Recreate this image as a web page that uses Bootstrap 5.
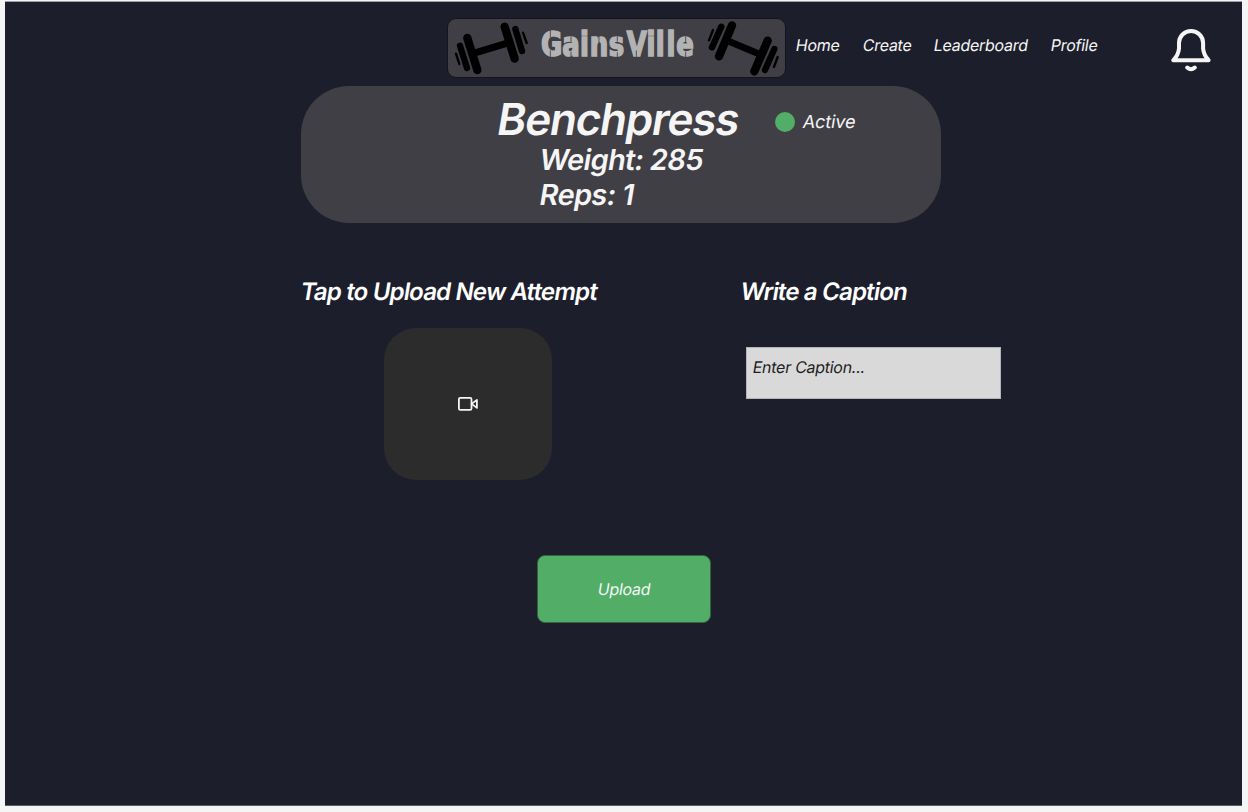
<!DOCTYPE html>
<html lang="en">
<head>
    <meta charset="UTF-8">
    <meta name="viewport" content="width=device-width, initial-scale=1.0">
    <title>GainsVille</title>

    <link href="https://cdn.jsdelivr.net/npm/bootstrap@5.3.0/dist/css/bootstrap.min.css" rel="stylesheet">

    <style>
        body {
            background-color: #f5f5f5;
            font-family: Inter, sans-serif;
            color: #f5f5f5;
            padding: 1px 6px 6px 5px;
        }
        /* slanted upright letters, the real italic has a different "a" */
        .slanted {
            display: inline-block;
            transform: skewX(-9.4deg);
            letter-spacing: -0.27px;
        }
        .app-frame {
            height: 805px;
            background-color: #1d1e2b;
            border-top: 1px solid #a0a1a8;
            border-bottom: 1px solid #5c5c67;
        }
        .top-bar {
            padding: 16px 31px 0 442px;
            height: 84px;
        }
        .logo-box {
            width: 339px;
            height: 60px;
            background-color: #403f45;
            border: 1px solid #14141c;
            border-radius: 9px;
        }
        .logo-box svg { display: block; }
        .main-links { margin: 16px 0 0 10px; gap: 23px; }
        .main-links a {
            color: #f5f5f5;
            font-size: 16px;
            line-height: 22px;
        }
        .bell-btn { margin-top: 7px; }
        .lift-card {
            width: 640px;
            height: 137px;
            margin-left: 296px;
            border-radius: 48px;
            background-color: #403f45;
            padding: 8px 0 0 197px;
        }
        .lift-card h1 {
            width: 277px;
            font-size: 44px;
            line-height: 50px;
            font-weight: 600;
        }
        .lift-card h1 .slanted { letter-spacing: -1.2px; }
        .status { padding-top: 6px; }
        .status-dot { width: 20px; height: 20px; background-color: #52ad66; }
        .status-text { font-size: 18px; line-height: 24px; }
        .status .status-text { letter-spacing: -0.1px; }
        .lift-stats {
            font-size: 29px;
            line-height: 35px;
            font-weight: 600;
            margin-top: -2px;
            padding-left: 42px;
        }
        .lift-stats .slanted { letter-spacing: -0.65px; }
        .attempt-row { padding: 54px 0 0 296px; }
        .attempt-row h2 {
            font-size: 24px;
            line-height: 29px;
            font-weight: 600;
            color: #fff;
        }
        .attempt-row h2 .slanted { letter-spacing: -0.82px; }
        .upload-col { width: 440px; }
        .video-tile {
            width: 168px;
            height: 152px;
            margin: 22px 0 0 83px;
            border-radius: 32px;
            background-color: #2c2c2c;
        }
        .caption-input {
            width: 255px;
            height: 52px;
            margin: 41px 0 0 5px;
            padding: 7px 6px;
            background-color: #d9d9d9;
            border: 1px solid #b5b5b8;
            color: #1e1e1e;
            font-size: 16px;
            line-height: 24px;
        }
        .upload-btn {
            width: 174px;
            height: 68px;
            margin: 75px 0 0 532px;
            background-color: #52ad66;
            border: 1px solid #35643f;
            border-radius: 8px;
            color: #f5f5f5;
            font-size: 16px;
        }
    </style>
</head>
<body>

    <div class="app-frame">

        <nav class="top-bar d-flex align-items-start">
            <a href="#" class="logo-box">
                <svg width="337" height="58" viewBox="25 28 1011 174">
                    <g fill="none" stroke="#000" stroke-linecap="round">
                        <!-- left dumbbell -->
                        <path stroke-width="25" d="M83 85L113 181M195 51L225 147"/>
                        <path stroke-width="19" d="M61 108L82 175M227 58L247 124"/>
                        <path stroke-width="7" d="M49 132L59 163M250 69L261 100"/>
                        <path stroke-width="21" d="M101 131L208 99"/>
                        <!-- right dumbbell -->
                        <path stroke-width="25" d="M877 47L838 140M984 93L944 185"/>
                        <path stroke-width="19" d="M845 51L817 113M1004 118L976 181"/>
                        <path stroke-width="7" d="M820 61L808 92M1014 142L1003 172"/>
                        <path stroke-width="20" d="M861 92L963 135"/>
                    </g>
                    <text transform="scale(.84 1)" x="362 438 501 536 604 668 739 772 810 845" y="140" font-family="DejaVu Sans Condensed, DejaVu Sans" font-stretch="condensed" font-weight="700" font-size="103" fill="#b3b3b3" stroke="#b3b3b3" stroke-width="5">GainsVille</text>
                    <!-- stencil cuts -->
                    <path fill="none" stroke="#403f45" stroke-width="2.5" d="M332 58V84M332 122V145M394 80V98M394 126V145M478 80V102M533 80V96M533 128V145M590 122V145M738 80V98M738 126V145"/>
                </svg>
            </a>
            <div class="main-links d-flex">
                <a class="text-decoration-none slanted" href="#">Home</a>
                <a class="text-decoration-none slanted" href="#">Create</a>
                <a class="text-decoration-none slanted" href="#">Leaderboard</a>
                <a class="text-decoration-none slanted" href="#">Profile</a>
            </div>
            <a href="#" class="bell-btn ms-auto" aria-label="Notifications">
                <svg class="d-block" width="40" height="48" viewBox="0 0 40 48" fill="none" stroke="#f5f5f5" stroke-width="4" stroke-linecap="round" stroke-linejoin="round">
                    <path d="M2.4 35.2H37.6C34 31.4 32.5 28 32.1 23.5V18A12 12 0 0 0 8 18V23.5C7.6 28 6 31.4 2.4 35.2Z"/>
                    <path d="M16.2 42.5Q20 46 23.8 42.5"/>
                </svg>
            </a>
        </nav>

        <div class="lift-card">
            <div class="d-flex align-items-center">
                <h1 class="m-0"><span class="slanted">Benchpress</span></h1>
                <div class="status d-flex align-items-center gap-2">
                    <span class="status-dot rounded-circle"></span>
                    <span class="status-text slanted">Active</span>
                </div>
            </div>
            <div class="lift-stats">
                <div><span class="slanted">Weight: 285</span></div>
                <div><span class="slanted">Reps: 1</span></div>
            </div>
        </div>

        <div class="attempt-row d-flex">
            <div class="upload-col">
                <h2 class="m-0"><span class="slanted">Tap to Upload New Attempt</span></h2>
                <div class="video-tile d-flex align-items-center justify-content-center">
                    <svg width="20" height="14" viewBox="0 0 20 14" fill="none" stroke="#f5f5f5" stroke-width="1.8" stroke-linejoin="round">
                        <rect x="0.9" y="0.9" width="12.6" height="12" rx="1.4"/>
                        <path d="M13.6 6.9L18.9 2.9V10.9Z"/>
                    </svg>
                </div>
            </div>
            <div>
                <h2 class="m-0"><span class="slanted">Write a Caption</span></h2>
                <div class="caption-input" role="textbox"><span class="slanted">Enter Caption...</span></div>
            </div>
        </div>

        <button class="upload-btn d-block"><span class="slanted">Upload</span></button>

    </div>

    <script src="https://cdn.jsdelivr.net/npm/bootstrap@5.3.0/dist/js/bootstrap.bundle.min.js"></script>
</body>
</html>
